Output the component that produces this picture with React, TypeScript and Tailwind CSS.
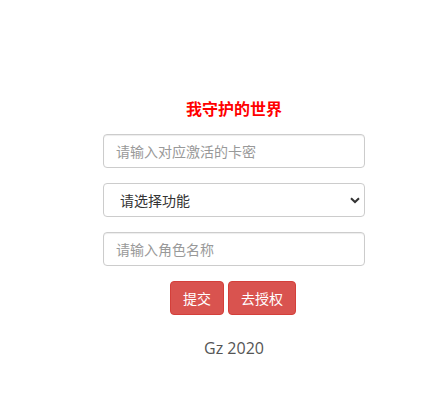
import React from "react";

const cjk = "font-['Noto_Sans_CJK_SC',sans-serif]";
const inputCls =
  "mt-[15px] h-[34px] w-full rounded-[4px] border border-[#ccc] px-[12px] text-[14px] text-[#555] placeholder:text-[#999] outline-none shadow-[inset_0_1px_1px_rgba(0,0,0,0.075)] font-['Noto_Sans_CJK_SC',sans-serif]";
const btnCls =
  "h-[34px] rounded-[4px] border border-[#d43f3a] bg-[#d9534f] px-[12px] text-[14px] text-white font-['Noto_Sans_CJK_SC',sans-serif]";

export default function App() {
  return (
    <div className="w-[447px] h-[395px] bg-white font-['Open_Sans','Noto_Sans_CJK_SC',sans-serif]">
      <div className="ml-[103px] w-[262px] pt-[97px] flex flex-col">
        <h1 className={`text-center text-[16px] leading-[22px] font-bold text-[#ff0000] ${cjk}`}>
          我守护的世界
        </h1>
        <input className={inputCls} placeholder="请输入对应激活的卡密" />
        <div className="relative mt-[15px]">
          <select className="appearance-none h-[34px] w-full rounded-[4px] border border-[#ccc] pl-[16px] pr-[12px] text-[14px] text-[#333] bg-white outline-none font-['Noto_Sans_CJK_SC',sans-serif]">
            <option>请选择功能</option>
          </select>
          <svg className="absolute right-[5px] top-[14px] pointer-events-none" width="10" height="7" viewBox="0 0 10 7">
            <path d="M1 1.2 L5 5 L9 1.2" fill="none" stroke="#333" strokeWidth="2" />
          </svg>
        </div>
        <input className={inputCls} placeholder="请输入角色名称" />
        <div className="mt-[15px] flex justify-center gap-[4px] pr-[2px]">
          <button className={btnCls}>提交</button>
          <button className={btnCls}>去授权</button>
        </div>
        <p className="mt-[22px] text-center text-[16px] leading-[22px] text-[#555]">Gz 2020</p>
      </div>
    </div>
  );
}
